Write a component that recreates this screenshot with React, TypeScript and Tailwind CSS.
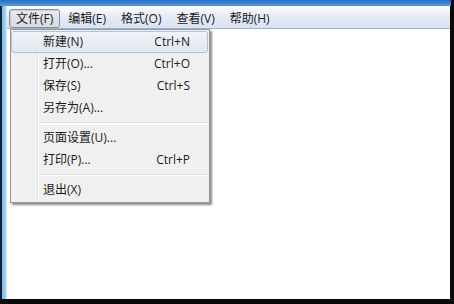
import React from 'react';

const FONT = { fontFamily: '"Open Sans", "Noto Sans CJK SC", sans-serif' };

const MENUS = ['文件(F)', '编辑(E)', '格式(O)', '查看(V)', '帮助(H)'];

type Item = { label: string; keys?: string; active?: boolean } | 'sep';

const ITEMS: Item[] = [
  { label: '新建(N)', keys: 'Ctrl+N', active: true },
  { label: '打开(O)...', keys: 'Ctrl+O' },
  { label: '保存(S)', keys: 'Ctrl+S' },
  { label: '另存为(A)...' },
  'sep',
  { label: '页面设置(U)...' },
  { label: '打印(P)...', keys: 'Ctrl+P' },
  'sep',
  { label: '退出(X)' },
];

export default function App() {
  return (
    <div className="relative flex h-[304px] w-[454px] flex-col bg-[#0a0a0a] text-[12px] text-[#1b1b1b]" style={FONT}>
      {/* title bar remnant */}
      <div className="mr-[3px] h-[6px] bg-gradient-to-b from-[#2a6cbc] to-[#4f9ce6]" />

      <div className="flex min-h-0 flex-1 pb-[5px] pr-[4px]">
        {/* left window frame */}
        <div className="flex w-[7px]">
          <div className="w-[2px] bg-[#0c2339]" />
          <div className="w-[4px] bg-gradient-to-r from-[#7dbdec] to-[#a3d3f5]" />
          <div className="w-[1px] bg-[#d4e9f9]" />
        </div>

        <div className="flex min-w-0 flex-1 flex-col bg-white">
          {/* menu bar */}
          <div className="flex h-[23px] gap-[1px] border-b border-[#9fb2cb] bg-gradient-to-b from-[#fbfcfe] via-[#e5ebf5] to-[#d9e2f1] pl-[2px]">
            {MENUS.map((m, i) => (
              <div
                key={m}
                className={`mt-[3px] flex h-[19px] items-center rounded-[3px] border px-[6px] ${
                  i === 0
                    ? 'border-[#8a8e95] bg-gradient-to-b from-[#e9ecf1] to-[#d6dbe2] shadow-[inset_1px_1px_1px_rgba(0,0,0,0.12)]'
                    : 'border-transparent'
                }`}
              >
                {m}
              </div>
            ))}
          </div>
          <div className="flex-1" />
        </div>
      </div>

      {/* dropdown */}
      <div className="absolute left-[10px] top-[29px] w-[200px] border border-[#979797] bg-[#f0f0f0] py-[1px] pr-[1px] shadow-[2px_2px_2px_rgba(0,0,0,0.45)]">
        <div className="pointer-events-none absolute bottom-0 left-[26px] top-0 w-[2px] border-l border-[#e2e3e3]">
          <div className="h-full w-[1px] bg-white" />
        </div>
        {ITEMS.map((it, i) =>
          it === 'sep' ? (
            <div key={i} className="flex h-[8px] items-center pl-[28px]">
              <div className="h-[2px] w-full border-t border-[#e0e0e0] bg-white" />
            </div>
          ) : (
            <div
              key={i}
              className={`relative flex h-[22px] items-center justify-between rounded-[3px] border pl-[31px] pr-[17px] ${
                it.active
                  ? 'border-[#b3c3d7] bg-gradient-to-b from-[#f1f4f8] to-[#e0e7f0]'
                  : 'border-transparent'
              }`}
            >
              <span>{it.label}</span>
              {it.keys && <span>{it.keys}</span>}
            </div>
          ),
        )}
      </div>
    </div>
  );
}
